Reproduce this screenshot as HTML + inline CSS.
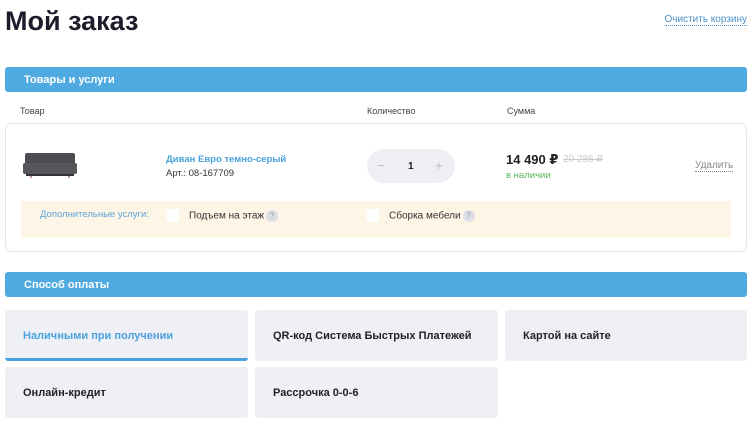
<!DOCTYPE html>
<html><head><meta charset="utf-8"><style>
*{margin:0;padding:0;box-sizing:border-box}
body{width:752px;height:426px;background:#fff;font-family:"Liberation Sans","DejaVu Sans",sans-serif;color:#222;position:relative;overflow:hidden}
.a{position:absolute;white-space:nowrap}
h1{position:absolute;left:5px;top:6px;font-size:27px;font-weight:bold;color:#1c1c2a}
.bar{position:absolute;left:5px;width:742px;height:25px;background:#4eaae0;border-radius:3px;color:#fff;font-weight:bold;font-size:11px;padding:7px 0 0 19px}
.dot{border-bottom:1px dotted currentColor}
.th{font-size:9px;color:#444;top:106px}
.card{position:absolute;left:5px;top:123px;width:742px;height:129px;border:1px solid #e6e6ec;border-radius:6px}
.svc{position:absolute;left:21px;top:201px;width:710px;height:37px;background:#fdf5e6}
.cb{position:absolute;width:13px;height:13px;background:#fff;border-radius:2px}
.q{display:inline-block;width:12px;height:12px;border-radius:50%;background:#dfdfe8;color:#999;font-size:8px;text-align:center;line-height:12px;vertical-align:middle;margin-left:2px}
.tile{position:absolute;width:243px;height:51px;background:#efeff6;border-radius:3px;font-weight:bold;font-size:11px;color:#222;padding:20px 0 0 18px}
</style></head><body>
<h1>Мой заказ</h1>
<div class="a dot" style="right:5px;top:14px;font-size:10px;color:#4a8fc7">Очистить корзину</div>
<div class="bar" style="top:67px">Товары и услуги</div>
<div class="a th" style="left:20px">Товар</div>
<div class="a th" style="left:367px">Количество</div>
<div class="a th" style="left:507px">Сумма</div>
<div class="card"></div>
<svg class="a" style="left:23px;top:150px" width="55" height="30" viewBox="0 0 55 30"><rect x="2" y="3" width="50" height="12" rx="2" fill="#4a4c50"/><rect x="0" y="13" width="54" height="11" rx="2" fill="#55575b"/><rect x="3" y="24" width="48" height="2" fill="#333"/><rect x="7" y="26" width="2" height="2" fill="#b98"/><rect x="45" y="26" width="2" height="2" fill="#b98"/></svg>
<div class="a" style="left:166px;top:154px;font-size:9.5px;font-weight:bold;color:#4aa3dc">Диван Евро темно-серый</div>
<div class="a" style="left:166px;top:168px;font-size:9.5px;color:#333">Арт.: 08-167709</div>
<div class="a" style="left:367px;top:149px;width:88px;height:34px;border-radius:17px;background:#efeff3"></div>
<div class="a" style="left:377px;top:158px;font-size:13px;color:#bbb">−</div>
<div class="a" style="left:408px;top:161px;font-size:10px;font-weight:bold">1</div>
<div class="a" style="left:435px;top:158px;font-size:13px;color:#bbb">+</div>
<div class="a" style="left:506px;top:152px;font-size:13px;font-weight:bold;color:#222">14 490 ₽</div>
<div class="a" style="left:563px;top:154px;font-size:10px;color:#ccc;text-decoration:line-through">20 286 ₽</div>
<div class="a" style="left:506px;top:170px;font-size:9.5px;color:#5cb85c">в наличии</div>
<div class="a dot" style="left:695px;top:160px;font-size:10px;color:#888">Удалить</div>
<div class="svc"></div>
<div class="a" style="left:40px;top:209px;font-size:9.5px;color:#5ba3d8">Дополнительные услуги:</div>
<div class="cb" style="left:166px;top:209px"></div>
<div class="a" style="left:189px;top:210px;font-size:10px;color:#333">Подъем на этаж<span class="q">?</span></div>
<div class="cb" style="left:366px;top:209px"></div>
<div class="a" style="left:389px;top:210px;font-size:10px;color:#333">Сборка мебели<span class="q">?</span></div>
<div class="bar" style="top:272px">Способ оплаты</div>
<div class="tile" style="left:5px;top:310px;color:#4aa3dc;border-bottom:3px solid #4aa3dc">Наличными при получении</div>
<div class="tile" style="left:255px;top:310px">QR-код Система Быстрых Платежей</div>
<div class="tile" style="left:505px;top:310px;width:242px">Картой на сайте</div>
<div class="tile" style="left:5px;top:367px">Онлайн-кредит</div>
<div class="tile" style="left:255px;top:367px">Рассрочка 0-0-6</div>
</body></html>
